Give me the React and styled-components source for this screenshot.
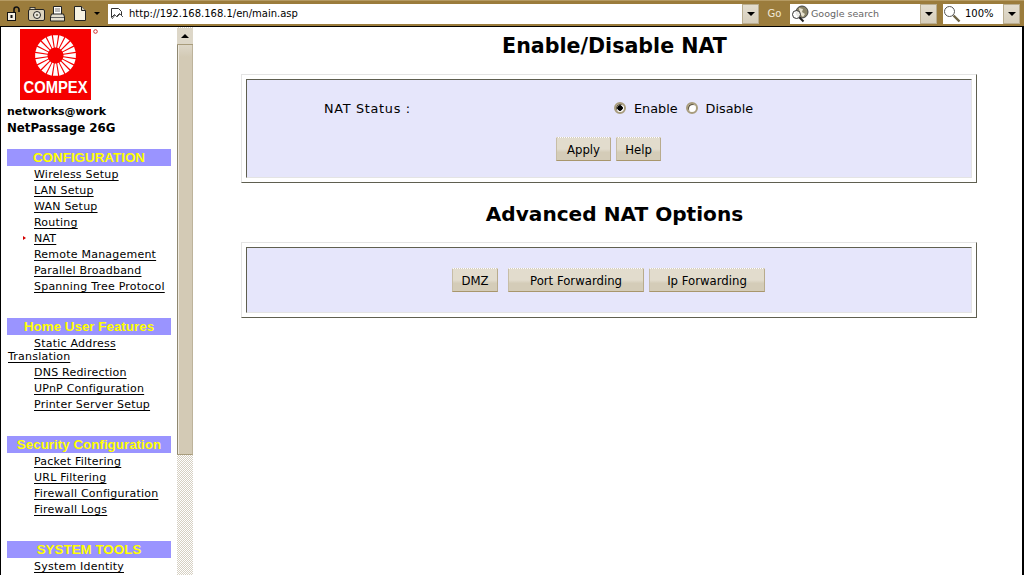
import React from "react";
import styled, { createGlobalStyle } from "styled-components";

const GlobalStyle = createGlobalStyle`
  html, body {
    margin: 0;
    padding: 0;
    height: 575px;
    overflow: hidden;
    background: #fff;
    font-family: "DejaVu Sans", Verdana, sans-serif;
  }
`;

const Page = styled.div`
  width: 1024px;
  height: 575px;
  display: flex;
  flex-direction: column;
  overflow: hidden;
`;

/* browser toolbar */
const Toolbar = styled.div`
  height: 26px;
  flex: none;
  display: flex;
  align-items: center;
  box-sizing: border-box;
  padding: 0 0 0 6px;
  background-color: #9b7c3c;
  background-image: radial-gradient(#85692e 0.6px, transparent 0.7px);
  background-size: 2px 2px;
  border-top: 1px solid #b59a62;
`;

const IconButton = styled.span`
  display: flex;
  flex: none;
  width: ${(p) => p.$w}px;
  margin-left: ${(p) => p.$ml || 0}px;
  justify-content: center;
  align-items: center;
`;

const Field = styled.div`
  height: 20px;
  width: ${(p) => p.$w}px;
  margin-left: ${(p) => p.$ml || 0}px;
  box-sizing: border-box;
  display: flex;
  align-items: center;
  background: #fff;
  font-size: ${(p) => p.$size || 10}px;
  color: ${(p) => p.$color || "#000"};
`;

const FieldLabel = styled.span`
  flex: 1;
  padding-left: ${(p) => p.$pl || 3}px;
  white-space: nowrap;
  overflow: hidden;
`;

const DropButton = styled.span`
  width: 17px;
  height: 20px;
  flex: none;
  display: flex;
  align-items: center;
  justify-content: center;
  box-sizing: border-box;
  background: linear-gradient(#e3ddcf, #d6cebb);
  border: 1px solid #b9ad90;
  &::after {
    content: "";
    border-left: 4px solid transparent;
    border-right: 4px solid transparent;
    border-top: 4px solid #000;
  }
`;

const GoLabel = styled.span`
  width: 31px;
  flex: none;
  text-align: center;
  font-size: 10px;
  color: #f2ead8;
`;

const Frames = styled.div`
  flex: 1;
  min-height: 0;
  display: flex;
  border-top: 1px solid #000;
  border-left: 1px solid #000;
  border-right: 2px solid #000;
`;

/* left menu frame */
const Sidebar = styled.nav`
  width: 176px;
  flex: none;
  overflow: hidden;
  box-sizing: border-box;
  padding: 2px 0 0 6px;
  background: #fff;
`;

const LogoBox = styled.div`
  margin-left: 13px;
  height: 72px;
`;

const Brand = styled.div`
  font-weight: bold;
  font-size: ${(p) => p.$size}px;
  line-height: 16px;
  color: #000;
  white-space: nowrap;
`;

const Brands = styled.div`
  margin-top: 3px;
  margin-bottom: 13px;
`;

const MenuGroup = styled.section`
  margin-bottom: ${(p) => p.$gap}px;
`;

const MenuHeader = styled.h3`
  margin: 0 0 2px;
  width: 164px;
  height: 17px;
  background: #9a94ff;
  color: #ffff00;
  font: bold 13.4px/17px "Liberation Sans", Arial, sans-serif;
  text-align: center;
`;

const MenuList = styled.ul`
  list-style: none;
  margin: 0;
  padding: 0;
  display: flex;
  flex-direction: column;
  gap: 3px;
`;

const MenuItem = styled.li`
  position: relative;
  width: 164px;
  padding-left: 1px;
  box-sizing: border-box;
  text-indent: 26px;
  font-size: 11px;
  line-height: 13px;
  letter-spacing: 0.22px;
  ${(p) =>
    p.$active &&
    `&::before {
      content: "";
      position: absolute;
      left: 16px;
      top: 4px;
      border-left: 3px solid #d40000;
      border-top: 2px solid transparent;
      border-bottom: 2px solid transparent;
    }`}
`;

const MenuLink = styled.a`
  color: #000;
  text-decoration: underline;
  text-underline-offset: 2px;
`;

/* fake frame scrollbar */
const ScrollBar = styled.div`
  width: 16px;
  flex: none;
  display: flex;
  flex-direction: column;
  background-color: #fff;
  background-image: conic-gradient(#d6d0c2 25%, #fff 0 50%, #d6d0c2 0 75%, #fff 0);
  background-size: 2px 2px;
`;

const ScrollUp = styled.div`
  height: 16px;
  flex: none;
  margin-top: 1px;
  display: flex;
  align-items: center;
  justify-content: center;
  background: #ddd7c8;
  border-bottom: 1px solid #a89c7c;
  &::after {
    content: "";
    border-left: 4px solid transparent;
    border-right: 4px solid transparent;
    border-bottom: 4px solid #000;
  }
`;

const ScrollThumb = styled.div`
  height: 410px;
  flex: none;
  box-sizing: border-box;
  background: linear-gradient(#ddd7c8 0, #d3cab5 12px);
  border-left: 1px solid #8f8871;
  border-right: 1px solid #bdb39b;
  border-bottom: 1px solid #a89c7c;
  box-shadow: inset 1px 0 0 #efeadf;
`;

/* main frame */
const Main = styled.main`
  flex: 1;
  min-width: 0;
  box-sizing: border-box;
  padding: 3px 0 0 48px;
  background: #fff;
`;

const Title = styled.h1`
  margin: ${(p) => p.$top || 0}px 0 0;
  width: 747px;
  text-align: center;
  font-size: ${(p) => p.$size}px;
  line-height: 32px;
  font-weight: bold;
  color: #000;
`;

const OuterBox = styled.div`
  width: 736px;
  box-sizing: border-box;
  padding: 4px;
  margin-top: 12px;
  background: #fff;
  border: 1px solid;
  border-color: #e4e4e4 #5f5f50 #5f5f50 #e4e4e4;
`;

const InnerBox = styled.div`
  height: ${(p) => p.$h}px;
  box-sizing: border-box;
  background: #e6e6fb;
  border: 1px solid;
  border-color: #5f5f50 #e4e4e4 #e4e4e4 #5f5f50;
  font-size: 12.8px;
  color: #000;
`;

const StatusRow = styled.div`
  display: flex;
  align-items: center;
  height: 14px;
  padding-top: 21px;
  padding-left: 77px;
`;

const StatusLabel = styled.span`
  width: 290px;
  flex: none;
  letter-spacing: 0.7px;
`;

const RadioMark = styled.span`
  width: 12px;
  height: 12px;
  flex: none;
  box-sizing: border-box;
  border-radius: 50%;
  border: 2px solid #a89c7c;
  background: ${(p) => (p.$on ? "radial-gradient(circle, #000 0 2.5px, #fff 3px)" : "#fff")};
  box-shadow: inset 1px 1px 0 #5c5340;
  margin-right: ${(p) => p.$mr}px;
`;

const RadioText = styled.span`
  margin-right: ${(p) => p.$mr}px;
`;

const ButtonRow = styled.div`
  display: flex;
  padding-left: ${(p) => p.$pl}px;
  padding-top: ${(p) => p.$pt}px;
  gap: 5px;
`;

const Button = styled.button`
  width: ${(p) => p.$w}px;
  height: 24px;
  margin-right: ${(p) => p.$mr || 0}px;
  padding: 1px 0 0;
  box-sizing: border-box;
  font: 11.7px "DejaVu Sans", Verdana, sans-serif;
  color: #000;
  background: linear-gradient(#e2dccd 0, #e2dccd 50%, #d4ccb8 65%, #d4ccb8 100%);
  border: none;
  border-top: 1px dotted #fff;
  border-left: 1px solid #c7bda6;
  border-right: 1px solid #b8ab8c;
  border-bottom: 1px solid #a8966c;
`;

function LockIcon() {
  return (
    <svg width="15" height="16" viewBox="0 0 15 16">
      <path d="M8 7V3.5a2.5 2.5 0 0 1 5 0V6" fill="none" stroke="#111" strokeWidth="1.6" />
      <rect x="1.5" y="6.5" width="8" height="8" fill="#f3efe3" stroke="#111" />
      <rect x="4.5" y="9" width="2" height="3" fill="#111" />
    </svg>
  );
}

function CameraIcon() {
  return (
    <svg width="17" height="14" viewBox="0 0 17 14">
      <rect x="0.5" y="2.5" width="16" height="11" rx="1.5" fill="#ddd5bf" stroke="#222" />
      <rect x="2" y="0.5" width="5" height="2" fill="#ddd5bf" stroke="#222" strokeWidth="0.8" />
      <circle cx="9" cy="8" r="3.5" fill="#f4f0e4" stroke="#222" />
      <circle cx="9" cy="8" r="1.3" fill="#7f7a66" />
    </svg>
  );
}

function PrinterIcon() {
  return (
    <svg width="15" height="16" viewBox="0 0 15 16">
      <path d="M3.5 8V0.5h8V8" fill="#fff" stroke="#222" />
      <path d="M5 3h5M5 5h5" stroke="#777" />
      <path d="M1.5 8h12l1 3v4H0.5v-4z" fill="#e4dfd0" stroke="#222" />
      <path d="M1 11.5h13" stroke="#666" />
    </svg>
  );
}

function PageIcon() {
  return (
    <svg width="12" height="15" viewBox="0 0 12 15">
      <path d="M0.5 0.5h7l4 4v10h-11z" fill="#f6f2e2" stroke="#222" />
      <path d="M7.5 0.5v4h4" fill="#cfc8b2" stroke="#222" />
    </svg>
  );
}

function SmallCaret() {
  return (
    <svg width="6" height="3" viewBox="0 0 6 3">
      <path d="M0 0h6L3 3z" fill="#000" />
    </svg>
  );
}

function AddressIcon() {
  return (
    <svg width="12" height="12" viewBox="0 0 12 12">
      <path d="M0.5 0.5h7l3 3v4l-2-2-3 3-2-2-3 3z" fill="#fff" stroke="#333" />
      <path d="M1 11l3-4 2 2 3-3 3 3" fill="none" stroke="#555" />
    </svg>
  );
}

function SearchIcon() {
  return (
    <svg width="20" height="18" viewBox="0 0 20 18">
      <circle cx="12" cy="7" r="6" fill="#8a8468" stroke="#444" />
      <path d="M9 3l4 1-1 3 3 2-2 3-3-3z" fill="#e8e2cf" />
      <circle cx="6.5" cy="9.5" r="4" fill="#fff" fillOpacity="0.85" stroke="#333" />
      <path d="M9.5 12.5l4 4" stroke="#222" strokeWidth="2" />
    </svg>
  );
}

function ZoomIcon() {
  return (
    <svg width="18" height="18" viewBox="0 0 18 18">
      <circle cx="6.5" cy="6.5" r="5" fill="#fff" stroke="#555" />
      <path d="M10.5 10.5l6 6" stroke="#6d6344" strokeWidth="2.4" />
    </svg>
  );
}

function CompexLogo() {
  const spokes = Array.from({ length: 20 }, (_, i) => {
    const a = (i / 20) * Math.PI * 2;
    const da = 0.125;
    const pt = (r, t) => `${(35.5 + r * Math.cos(t)).toFixed(2)},${(26.5 + r * Math.sin(t)).toFixed(2)}`;
    return (
      <polygon
        key={i}
        fill="#fff"
        points={[pt(20.5, a - da), pt(20.5, a + da), pt(8, a + da * 0.75), pt(8, a - da * 0.75)].join(" ")}
      />
    );
  });
  return (
    <svg width="80" height="72" viewBox="0 0 80 72">
      <rect x="0" y="0" width="71" height="71" fill="#f60000" />
      {spokes}
      <text
        x="35.5"
        y="64"
        textAnchor="middle"
        fontFamily="Liberation Sans, Arial, sans-serif"
        fontWeight="bold"
        fontSize="17"
        fill="#fff"
        textLength="64"
        lengthAdjust="spacingAndGlyphs"
      >
        COMPEX
      </text>
      <circle cx="75.5" cy="2.5" r="1.8" fill="none" stroke="#d03030" strokeWidth="1" />
    </svg>
  );
}

const menus = [
  { title: "CONFIGURATION", gap: 25, items: ["Wireless Setup", "LAN Setup", "WAN Setup", "Routing", "NAT", "Remote Management", "Parallel Broadband", "Spanning Tree Protocol"] },
  { title: "Home User Features", gap: 25, items: ["Static Address Translation", "DNS Redirection", "UPnP Configuration", "Printer Server Setup"] },
  { title: "Security Configuration", gap: 25, items: ["Packet Filtering", "URL Filtering", "Firewall Configuration", "Firewall Logs"] },
  { title: "SYSTEM TOOLS", gap: 0, items: ["System Identity"] },
];

export default function App() {
  return (
    <Page>
      <GlobalStyle />
      <Toolbar>
        <IconButton $w={15}><LockIcon /></IconButton>
        <IconButton $w={17} $ml={7}><CameraIcon /></IconButton>
        <IconButton $w={15} $ml={5}><PrinterIcon /></IconButton>
        <IconButton $w={12} $ml={9}><PageIcon /></IconButton>
        <IconButton $w={6} $ml={8}><SmallCaret /></IconButton>
        <Field $w={651} $ml={8}>
          <IconButton $w={12} $ml={3}><AddressIcon /></IconButton>
          <FieldLabel $pl={6}>http://192.168.168.1/en/main.asp</FieldLabel>
          <DropButton />
        </Field>
        <GoLabel>Go</GoLabel>
        <Field $w={147} $color="#666" $size={9.5}>
          <IconButton $w={20}><SearchIcon /></IconButton>
          <FieldLabel $pl={1}>Google search</FieldLabel>
          <DropButton />
        </Field>
        <Field $w={77} $ml={6}>
          <IconButton $w={18}><ZoomIcon /></IconButton>
          <FieldLabel $pl={4}>100%</FieldLabel>
          <DropButton />
        </Field>
      </Toolbar>
      <Frames>
        <Sidebar>
          <LogoBox><CompexLogo /></LogoBox>
          <Brands>
            <Brand $size={11}>networks@work</Brand>
            <Brand $size={11.8}>NetPassage 26G</Brand>
          </Brands>
          {menus.map((menu) => (
            <MenuGroup key={menu.title} $gap={menu.gap}>
              <MenuHeader>{menu.title}</MenuHeader>
              <MenuList>
                {menu.items.map((item) => (
                  <MenuItem key={item} $active={item === "NAT"}>
                    <MenuLink>{item}</MenuLink>
                  </MenuItem>
                ))}
              </MenuList>
            </MenuGroup>
          ))}
        </Sidebar>
        <ScrollBar>
          <ScrollUp />
          <ScrollThumb />
        </ScrollBar>
        <Main>
          <Title $size={20.6}>Enable/Disable NAT</Title>
          <OuterBox>
            <InnerBox $h={99}>
              <StatusRow>
                <StatusLabel>NAT Status :</StatusLabel>
                <RadioMark $on $mr={8} />
                <RadioText $mr={8}>Enable</RadioText>
                <RadioMark $mr={8} />
                <RadioText>Disable</RadioText>
              </StatusRow>
              <ButtonRow $pl={309} $pt={22}>
                <Button $w={55}>Apply</Button>
                <Button $w={45}>Help</Button>
              </ButtonRow>
            </InnerBox>
          </OuterBox>
          <Title $top={15} $size={20.1}>Advanced NAT Options</Title>
          <OuterBox>
            <InnerBox $h={66}>
              <ButtonRow $pl={205} $pt={20}>
                <Button $w={46} $mr={5}>DMZ</Button>
                <Button $w={136}>Port Forwarding</Button>
                <Button $w={116}>Ip Forwarding</Button>
              </ButtonRow>
            </InnerBox>
          </OuterBox>
        </Main>
      </Frames>
    </Page>
  );
}
